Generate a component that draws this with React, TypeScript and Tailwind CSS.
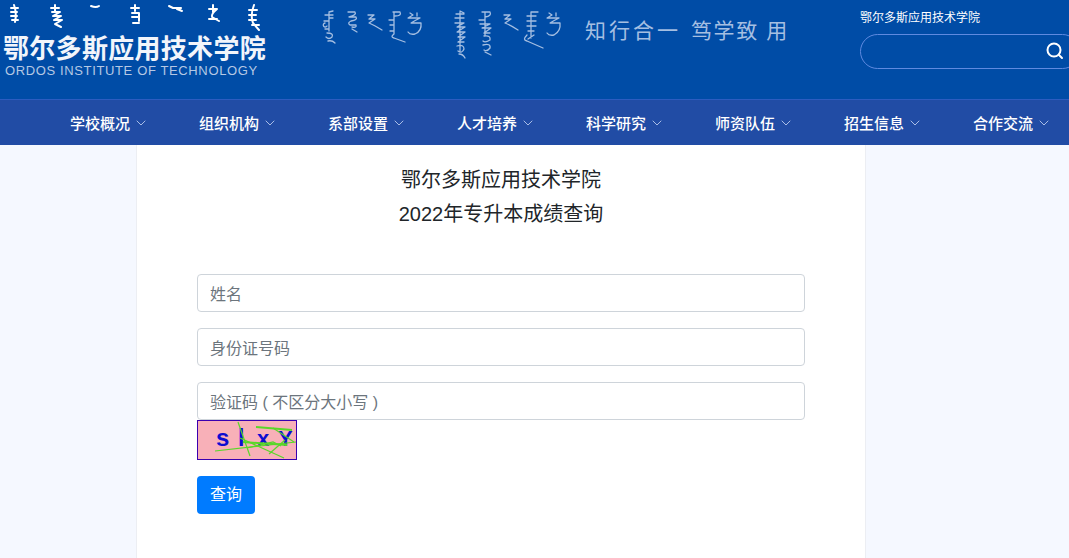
import { ChevronDown } from "lucide-react";

const CJK = "font-['Liberation_Sans','Noto_Sans_CJK_SC',sans-serif]";
const nav = ["学校概况", "组织机构", "系部设置", "人才培养", "科学研究", "师资队伍", "招生信息", "合作交流"];

function Script({ w, h, sw, paths, className }: { w: number; h: number; sw: number; paths: string[]; className: string }) {
  return (
    <svg width={w} height={h} viewBox={`0 0 ${w} ${h}`} fill="none" stroke="currentColor" strokeWidth={sw} strokeLinecap="round" strokeLinejoin="round" className={className}>
      {paths.map((d, i) => (
        <path key={i} d={d} />
      ))}
    </svg>
  );
}

function Captcha() {
  return (
    <svg width="100" height="40" viewBox="0 0 100 40" className="block">
      <rect x="0.5" y="0.5" width="99" height="39" fill="#f8b0b8" stroke="#3a00b0" />
      <g fill="#0c0cd0" fontFamily="'Liberation Sans',sans-serif" fontWeight="700">
        <text x="19" y="26" fontSize="24">s</text>
        <text x="41" y="26" fontSize="23">l</text>
        <text x="60" y="26" fontSize="22">x</text>
        <text x="81" y="26" fontSize="22">Y</text>
      </g>
      <g stroke="#58d828" strokeWidth="1.2" fill="none">
        <path d="M18 31 L99 22" />
        <path d="M41 2 L53 36" />
        <path d="M59 7 L95 10" strokeWidth="2" />
        <path d="M43 18 L87 38" />
        <path d="M50 28 L76 22 L84 26" />
        <path d="M76 8 L97 22" />
        <path d="M46 22 L90 25" strokeWidth="2" />
        <path d="M72 34 L88 20" />
      </g>
    </svg>
  );
}

export default function App() {
  return (
    <div className={`h-[558px] w-[1069px] overflow-hidden bg-[#f5f8ff] ${CJK}`}>
      <header className="flex h-[99px] bg-[#004ca6]">
        <div className="w-[322px] shrink-0 pl-[3px] pt-[3px]">
          <Script
            w={262}
            h={30}
            sw={2}
            className="ml-[6px] text-white"
            paths={[
              "M5 2 Q8 10 6 19 M2 5 H9 M2 9 H8 M2 13 H8 M3 17 H9",
              "M46 2 V9 M42 5 H50 M43 9 H51 L44 13 H52 L45 17 H53 L46 21 L52 24",
              "M82 3 Q87 5 90 3",
              "M126 2 V8 M122 5 H130 M123 10 H130 V18 M123 14 H130 M124 20 H130",
              "M160 3 L164 5 H172 L168 6 L173 8",
              "M204 2 V9 M200 6 H208 Q202 11 203 14 L210 18 M200 16 H208",
              "M245 2 Q241 12 244 20 L250 27 M240 7 H248 M240 12 H247 M240 17 H247 M243 22 H250",
            ]}
          />
          <div className="mt-[1px] whitespace-nowrap text-[26px] leading-[30px] font-bold tracking-[0.3px] text-[#f2f5fb]">鄂尔多斯应用技术学院</div>
          <div className="mt-[-1px] whitespace-nowrap pl-[2px] text-[13px] leading-[15px] tracking-[0.63px] text-[#b5c8e4]">ORDOS INSTITUTE OF TECHNOLOGY</div>
        </div>
        <div className="flex w-[537px] shrink-0 items-start pt-[10px] text-[#a5bfe2]">
          <Script
            w={102}
            h={36}
            sw={1.3}
            paths={[
              "M7 3 V21 M3 5 H11 M7 2 L11 1 M7 8 H11 M2 11 H7 M3 13 A2 2 0 1 0 5 16 M3 19 H7 M5 23 Q12 23 10 27 Q7 30 4 27 M6 31 Q10 30 13 33",
              "M26 2 H33 Q35 5 27 7 H34 Q36 10 29 11 Q25 13 28 15 H34 Q35 18 30 17 M30 19 L35 22",
              "M46 5 H52 L47 9 H53 L47 13 Q52 15 60 20",
              "M71 2 H78 Q80 6 73 6 M72 2 V24 M67 10 H72 M68 15 H72 M68 21 H72 M72 24 Q68 27 72 28 L83 32",
              "M88 3 L91 5 L86 8 H98 Q92 11 89 13 H99 Q100 21 93 24 Q88 25 86 22 M95 3 V6",
            ]}
          />
          <Script
            w={112}
            h={50}
            sw={1.3}
            className="ml-[28px]"
            paths={[
              "M8 2 V41 M4 4 H12 M8 1 L12 3 M3 8 H12 M3 13 H12 L5 17 H13 L5 22 H13 L6 27 H13 L6 32 H12 M5 36 Q12 34 12 39 Q10 44 6 41 M7 44 Q11 44 13 48",
              "M30 2 H38 Q40 6 33 7 M33 2 V26 M27 10 H33 M28 14 H38 L30 18 H39 L32 23 H38 M32 26 Q39 25 38 30 Q33 33 31 31 M31 35 Q39 33 38 38 Q35 42 32 40 M33 42 L39 45",
              "M52 5 H58 L53 9 H59 L53 13 Q58 15 66 20",
              "M79 2 H86 M79 2 V28 M75 6 H84 M75 11 H84 M75 16 H84 M76 21 H82 M75 25 Q70 30 75 31 L91 38 M82 25 L76 29",
              "M97 3 L100 5 L95 8 H107 Q101 11 98 13 H108 Q109 21 102 25 Q97 26 95 23 M104 3 V6",
            ]}
          />
          <div className="ml-[21px] mt-[7px] flex items-center whitespace-nowrap text-[21px] leading-[28px]">
            <span className="tracking-[3px]">知行合一</span>
            <span className="ml-[10px] tracking-[1.6px]">笃学致 用</span>
          </div>
        </div>
        <div className="flex-1 pl-[1px] pt-[10px]">
          <div className="text-[12px] leading-[16px] text-white">鄂尔多斯应用技术学院</div>
          <div className="relative mt-[8px] h-[35px] w-[220px] rounded-[18px] border border-[#5f8ae0]">
            <svg width="20" height="20" viewBox="0 0 20 20" fill="none" stroke="white" strokeWidth="2" strokeLinecap="round" className="absolute left-[184px] top-[6px]">
              <circle cx="9" cy="9" r="6.5" />
              <path d="M14 14 L17 17" />
            </svg>
          </div>
        </div>
      </header>
      <nav className="flex h-[46px] items-center border-t border-[#2c5cc0] bg-[#214ca5] pl-[70px]">
        {nav.map((t) => (
          <div key={t} className="flex w-[129px] shrink-0 items-center text-[15px] font-medium text-white">
            <span className="whitespace-nowrap pt-[4px]">{t}</span>
            <ChevronDown size={16} strokeWidth={1.5} className="ml-[3px] mt-[1px] text-[#a9bde6]" />
          </div>
        ))}
      </nav>
      <main className="ml-[136px] h-[413px] w-[730px] border-x border-[#eceef3] bg-white px-[60px]">
        <div className="pt-[18px] text-center text-[20px] leading-[34px] text-[#212529]">
          <div>鄂尔多斯应用技术学院</div>
          <div>2022年专升本成绩查询</div>
        </div>
        <form className="mt-[43px]">
          {["姓名", "身份证号码", "验证码 ( 不区分大小写 )"].map((p, i) => (
            <input
              key={p}
              placeholder={p}
              className={`block h-[38px] w-[608px] rounded-[4px] border border-[#ced4da] px-3 pt-[4px] text-[16px] text-[#495057] placeholder:text-[#6c757d] ${i < 2 ? "mb-4" : ""}`}
            />
          ))}
          <Captcha />
          <button type="button" className="mt-4 h-[38px] w-[58px] rounded-[4px] bg-[#007bff] text-[16px] text-white">
            查询
          </button>
        </form>
      </main>
    </div>
  );
}
